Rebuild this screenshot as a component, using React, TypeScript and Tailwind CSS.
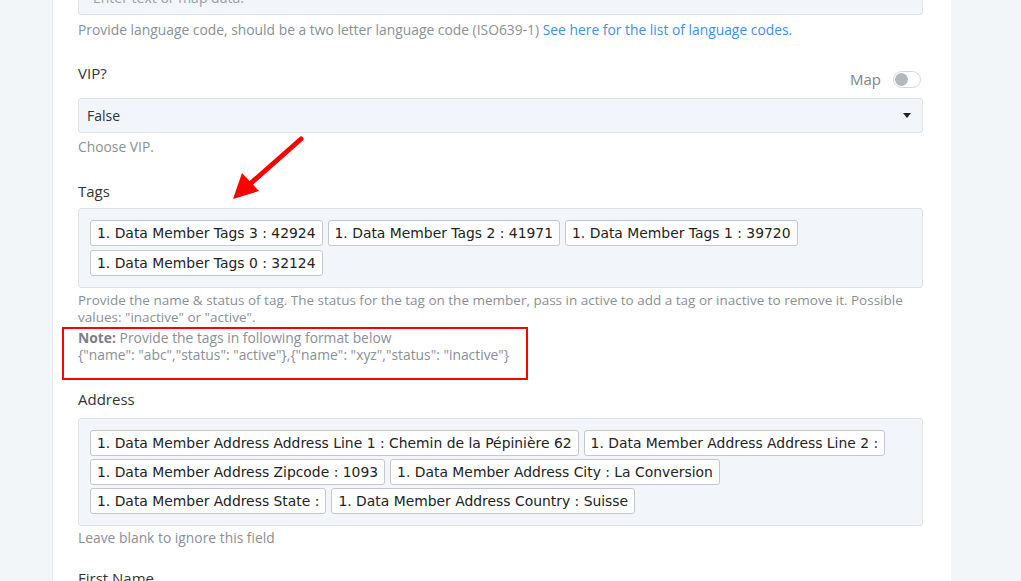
import React from "react";

const tags = [
  "1. Data Member Tags 3 : 42924",
  "1. Data Member Tags 2 : 41971",
  "1. Data Member Tags 1 : 39720",
  "1. Data Member Tags 0 : 32124",
];

const address = [
  "1. Data Member Address Address Line 1 : Chemin de la Pépinière 62",
  "1. Data Member Address Address Line 2 :",
  "1. Data Member Address Zipcode : 1093",
  "1. Data Member Address City : La Conversion",
  "1. Data Member Address State :",
  "1. Data Member Address Country : Suisse",
];

function Chip({ text }: { text: string }) {
  return (
    <span className="inline-flex items-center h-[26px] px-[6px] bg-white border border-[#c4c7cb] rounded-[3px] text-[13.9px] text-[#222] whitespace-nowrap [font-family:'DejaVu_Sans',Verdana,sans-serif]">
      {text}
    </span>
  );
}

function ChipBox({ items, gapY }: { items: string[]; gapY: string }) {
  return (
    <div className={`bg-[#f2f5f9] border border-[#dde2e7] rounded-[3px] px-[11px] pt-[11px] pb-[11px] flex flex-wrap gap-x-[5px] ${gapY}`}>
      {items.map((t) => (
        <Chip key={t} text={t} />
      ))}
    </div>
  );
}

export default function App() {
  return (
    <div className="w-full h-[581px] overflow-hidden bg-[#f3f6f9] flex [font-family:'Open_Sans',Lato,sans-serif]">
      <div className="relative ml-[52px] w-[899px] h-full bg-white border-l border-[#e6e9ee] pl-[25px] pr-[28px]">
        <div className="mt-[-21px] h-[36px] bg-[#f2f5f9] border border-[#dde2e7] rounded-[3px] flex items-center px-[14px] text-[14px] text-[#9aa0a6]">
          Enter text or map data.
        </div>
        <p className="mt-[6px] text-[13.85px] leading-[17px] text-[#8a8f96]">
          Provide language code, should be a two letter language code (ISO639-1){" "}
          <span className="text-[#3d8fe8]">See here for the list of language codes.</span>
        </p>

        <div className="mt-[25px] h-[20px] flex items-center justify-between">
          <span className="text-[15px] leading-[20px] text-[#333]">VIP?</span>
          <div className="relative top-[6px] mr-[2px] flex items-center gap-[12px]">
            <span className="text-[15px] leading-[20px] text-[#7d838a]">Map</span>
            <span className="w-[28px] h-[17px] rounded-full border border-[#d3d7dc] bg-white flex items-center pl-[1px]">
              <span className="w-[13px] h-[13px] rounded-full bg-[#b3b8be]" />
            </span>
          </div>
        </div>

        <div className="mt-[15px] h-[35px] bg-[#f2f5f9] border border-[#dde2e7] rounded-[3px] flex items-center justify-between pl-[8px] pr-[11px]">
          <span className="text-[14px] text-[#333]">False</span>
          <svg width="8" height="5" viewBox="0 0 8 5">
            <path d="M0 0 L8 0 L4 5 Z" fill="#222" />
          </svg>
        </div>
        <p className="mt-[5px] text-[13.85px] leading-[17px] text-[#8a8f96]">Choose VIP.</p>

        <div className="mt-[26px] text-[15px] leading-[20px] text-[#333]">Tags</div>
        <div className="mt-[7px]">
          <ChipBox items={tags} gapY="gap-y-[4px]" />
        </div>
        <p className="mt-[4px] text-[13.5px] leading-[17px] text-[#8a8f96]">
          Provide the name &amp; status of tag. The status for the tag on the member, pass in active to add a tag or inactive to remove it. Possible values: "inactive" or "active".
        </p>
        <p className="mt-[3px] text-[13.85px] leading-[17px] text-[#8a8f96]">
          <b className="font-bold text-[#7a7f86]">Note:</b> Provide the tags in following format below
          <br />
          {'{"name": "abc","status": "active"},{"name": "xyz","status": "inactive"}'}
        </p>

        <div className="mt-[26px] text-[15px] leading-[20px] text-[#333]">Address</div>
        <div className="mt-[9px]">
          <ChipBox items={address} gapY="gap-y-[3px]" />
        </div>
        <p className="mt-[3px] text-[13.85px] leading-[17px] text-[#8a8f96]">Leave blank to ignore this field</p>

        <div className="mt-[22px] text-[15px] leading-[20px] text-[#333]">First Name</div>

        {/* annotation overlays */}
        <div className="absolute left-[9px] top-[327px] w-[466px] h-[53px] border-2 border-[#ff0000] pointer-events-none" />
        <svg className="absolute left-[175px] top-[133px] pointer-events-none" width="80" height="72" viewBox="0 0 80 72">
          <line x1="73" y1="6" x2="22" y2="51" stroke="#ff0000" strokeWidth="5" strokeLinecap="round" />
          <polygon points="5,66 14,40 31,58" fill="#ff0000" />
        </svg>
      </div>
    </div>
  );
}
